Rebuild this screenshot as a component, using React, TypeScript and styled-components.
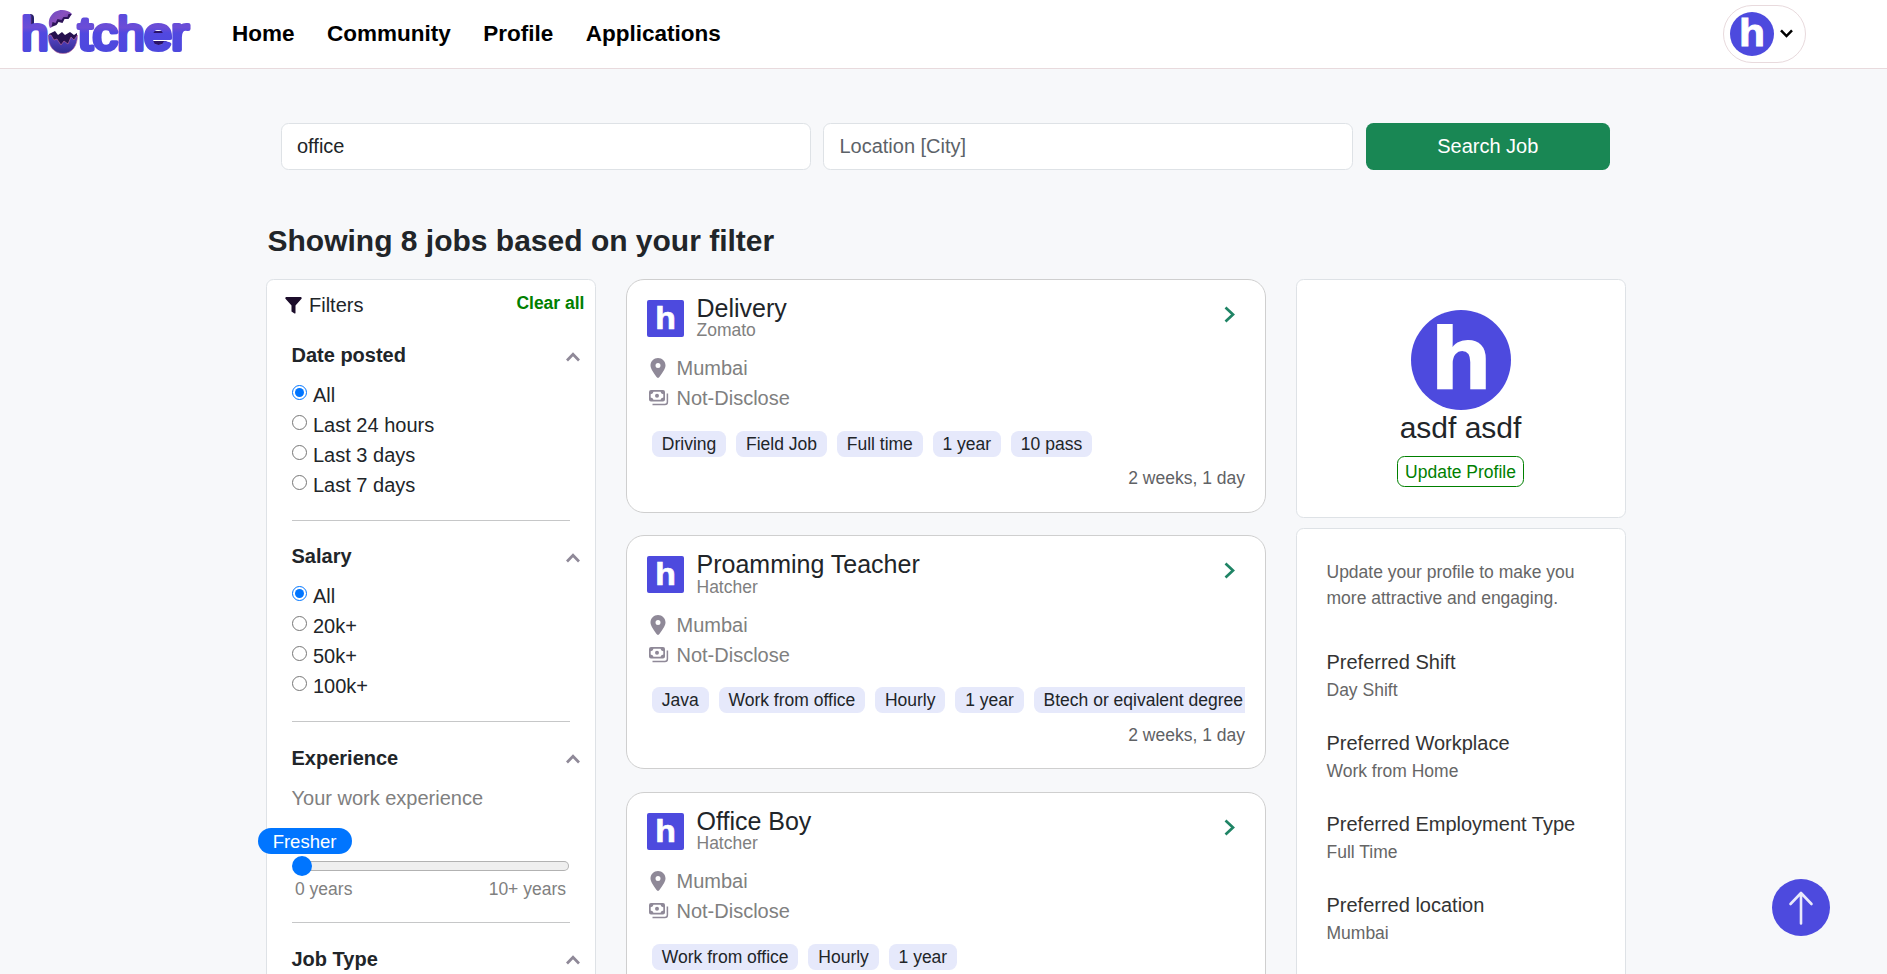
import React from "react";
import styled, { createGlobalStyle } from "styled-components";
import { FaLocationDot } from "react-icons/fa6";

const GlobalStyle = createGlobalStyle`
  *, *::before, *::after { box-sizing: border-box; }
  html, body { margin: 0; height: 100%; overflow: hidden; }
  body {
    background: #f7f8fa;
    color: #212529;
    font: 400 20px/30px "Liberation Sans", Arial, sans-serif;
  }
  p, h1, h2, h3 { margin: 0; font-weight: 400; }
`;

/* ---------- header ---------- */

const Header = styled.header`
  display: flex;
  align-items: center;
  height: 69px;
  padding: 0 81px 0 20px;
  background: #fff;
  border-bottom: 1px solid #e8dadd;
`;

const Nav = styled.nav`
  display: flex;
  gap: 32.5px;
  margin: -1px auto 0 38px;
`;

const NavLink = styled.a`
  color: #000;
  font-size: 22.5px;
  font-weight: 700;
  text-decoration: none;
`;

const AccountPill = styled.button`
  display: flex;
  align-items: center;
  gap: 6px;
  width: 83px;
  height: 58px;
  margin-top: -1px;
  padding: 0 6px;
  background: #fff;
  border: 1px solid #e8dadd;
  border-radius: 29px;
`;

/* ---------- search ---------- */

const Page = styled.main`
  width: 1360px;
  height: 905px;
  margin-left: 266px;
  overflow: clip;
  overflow-clip-margin: 20px;
`;

const SearchBar = styled.form`
  display: grid;
  grid-template-columns: 530px 530px 244px;
  column-gap: 12.4px;
  padding: 54px 15px 0;
`;

const SearchInput = styled.input`
  height: 47px;
  padding: 0 15px;
  color: #212529;
  background: #fff;
  border: 1px solid #dee2e6;
  border-radius: 7.5px;
  font: inherit;
  outline: none;
  &::placeholder { color: #5c6268; opacity: 1; }
`;

const SearchButton = styled.button`
  height: 47px;
  padding: 0 0 2px;
  color: #fff;
  background: #198754;
  border: 0;
  border-radius: 7.5px;
  font: inherit;
`;

const Heading = styled.h1`
  margin: 53px 0 20px 1.5px;
  font-size: 30px;
  font-weight: 700;
  line-height: 36px;
`;

const Columns = styled.div`
  display: grid;
  grid-template-columns: 330px 640px 330px;
  align-items: start;
  gap: 30px;
`;

/* ---------- filters ---------- */

const Panel = styled.section`
  background: #fff;
  border: 1px solid #dee2e6;
  border-radius: 7.5px;
`;

const FilterPanel = styled(Panel)`
  height: 900px;
`;

const FilterTop = styled.div`
  display: flex;
  align-items: flex-start;
  height: 60px;
  padding: 10px 10.5px 0 17.5px;
  svg { margin: 7px 7.5px 0 0; }
`;

const ClearAll = styled.a`
  margin: -2px 0 0 auto;
  color: green;
  font-size: 17.5px;
  font-weight: 700;
`;

const Group = styled.div`
  width: 278px;
  height: 201.25px;
  margin-left: 24.5px;
`;

const GroupHead = styled.div`
  display: flex;
  align-items: center;
  justify-content: space-between;
  height: 30px;
  margin: 0 -10px 10px 0;
  font-weight: 700;
  svg { margin-top: 3px; }
`;

const GroupBody = styled.div`
  height: 140.6px;
  border-bottom: 1px solid #c6c7c8;
`;

const Option = styled.label`
  display: flex;
  gap: 6.5px;
  height: 30px;
  input {
    width: 15px;
    height: 15px;
    margin: 5px 0 0;
  }
`;

const Hint = styled.p`
  color: #808080;
`;

const Bubble = styled.output`
  display: block;
  width: 94px;
  height: 26px;
  margin: 15.5px 0 2px -34px;
  color: #fff;
  background: #0075ff;
  border-radius: 13px;
  font-size: 18.5px;
  line-height: 27px;
  text-align: center;
`;

const Slider = styled.div`
  display: flex;
  align-items: center;
  width: 277px;
  height: 20px;
`;

const Thumb = styled.span`
  z-index: 1;
  width: 20px;
  height: 20px;
  background: #0075ff;
  border-radius: 50%;
`;

const Track = styled.span`
  flex: 1;
  height: 10px;
  margin-left: -5px;
  background: #efefef;
  border: 1px solid #b2b2b2;
  border-left: 0;
  border-radius: 0 5px 5px 0;
`;

const Scale = styled.div`
  display: flex;
  justify-content: space-between;
  padding: 0 3.5px 0 3.5px;
  color: #808080;
  font-size: 17.5px;
  line-height: 26px;
`;

/* ---------- jobs ---------- */

const JobList = styled.div`
  display: flex;
  flex-direction: column;
  gap: 22.4px;
`;

const JobCard = styled.article`
  height: 234px;
  padding: 20px;
  background: #fff;
  border: 1px solid #cfcfcf;
  border-radius: 18px;
`;

const JobHead = styled.div`
  display: flex;
  height: 53.2px;
`;

const CompanyBadge = styled.div`
  width: 37px;
  height: 37px;
  background: #4d4ade;
  border-radius: 2px;
`;

const JobNames = styled.div`
  margin: -5px auto 0 12.5px;
`;

const JobTitle = styled.h2`
  font-size: 25px;
  line-height: 26.2px;
`;

const Company = styled.p`
  color: #808080;
  font-size: 17.5px;
  line-height: 18px;
`;

const OpenIcon = styled.span`
  display: block;
  margin: 0 9px 0 0;
`;

const Detail = styled.div`
  display: grid;
  grid-template-columns: 29.5px auto;
  height: 30px;
  color: #808080;
  svg { color: #8f8998; }
`;

const Tags = styled.div`
  display: flex;
  gap: 10px;
  margin: 17.8px 0 8.2px 5px;
  overflow: hidden;
`;

const Tag = styled.span`
  flex: none;
  height: 26px;
  padding: 0 9.85px;
  background: #e6e9fb;
  border-radius: 7.5px;
  font-size: 17.5px;
  line-height: 26px;
  white-space: nowrap;
`;

const Age = styled.p`
  color: #5f6265;
  font-size: 17.5px;
  line-height: 26px;
  text-align: right;
`;

/* ---------- profile ---------- */

const ProfileCard = styled(Panel)`
  display: flex;
  flex-direction: column;
  align-items: center;
  height: 239px;
  margin-bottom: 10px;
  padding-top: 30px;
`;

const UserName = styled.h2`
  margin: 0 1px 10px 0;
  font-size: 30px;
  line-height: 36px;
`;

const UpdateButton = styled.button`
  width: 127px;
  height: 31px;
  margin-right: 1px;
  padding: 1px 0 0;
  color: green;
  background: #fff;
  border: 1px solid green;
  border-radius: 7.5px;
  font: 17.5px "Liberation Sans", Arial, sans-serif;
`;

const PreferenceCard = styled(Panel)`
  height: 500px;
  padding: 30px 29.5px;
`;

const Note = styled.p`
  margin-bottom: 35.5px;
  color: #666;
  font-size: 17.5px;
  line-height: 26.25px;
`;

const Preference = styled.div`
  height: 81px;
  color: #333;
  p {
    color: #666;
    font-size: 17.5px;
    line-height: 26px;
  }
`;

const ToTop = styled.button`
  position: fixed;
  right: 57px;
  bottom: 38px;
  width: 58px;
  height: 57px;
  padding: 0;
  background: #4d4ade;
  border: 0;
  border-radius: 50%;
`;

/* ---------- drawings ---------- */

const wordmarkLetters: [string, number, number][] = [
  ["h", 21.2, 1.07],
  ["t", 78, 1.15],
  ["c", 92.5, 1.1],
  ["h", 117.2, 1.07],
  ["e", 144, 1.1],
  ["r", 171, 1.18],
];

const Wordmark = () => (
  <svg width="174" height="56" viewBox="20 6 174 56" role="img" aria-label="hatcher">
    <defs>
      <linearGradient id="word" x1="0" y1="0" x2="0" y2="1">
        <stop offset="0.15" stopColor="#5c4bdc" />
        <stop offset="0.37" stopColor="#6c4dd6" />
        <stop offset="0.48" stopColor="#5148e0" />
        <stop offset="1" stopColor="#4b48dc" />
      </linearGradient>
      <linearGradient id="shell" x1="0" y1="0" x2="1" y2="1">
        <stop offset="0" stopColor="#6a4cc8" />
        <stop offset="0.45" stopColor="#8a50bd" />
        <stop offset="1" stopColor="#3b2a86" />
      </linearGradient>
      <linearGradient id="base" x1="0" y1="0" x2="0" y2="1">
        <stop offset="0" stopColor="#5a46c8" />
        <stop offset="1" stopColor="#302c92" />
      </linearGradient>
    </defs>
    <path d="M152 31h12v6h-12z M153 41h14q-5 6-14 3z" fill="#2a1368" />
    <path d="M30 14q4 0 4 4v8l-3 6v16q-1 3-5 3z" fill="#26206b" />
    <g
      fontFamily="Liberation Sans, Arial, sans-serif"
      fontSize="46"
      strokeWidth="4"
      strokeLinejoin="round"
      fill="url(#word)"
      stroke="url(#word)"
    >
      {wordmarkLetters.map(([letter, x, stretch]) => (
        <text key={x} transform={`translate(${x} 50) scale(${stretch} 1)`}>
          {letter}
        </text>
      ))}
    </g>
    <path d="M51 29 64 19l10 2 2 16-13 5-12-8z" fill="#fff" />
    <path d="m49 34 6-3 3 4 4-3 3 3 5-3 4 3 3-2v6l-5 8H54l-5-7z" fill="#26104f" />
    <path
      d="M48 35c0 11 6 18.500 15 18.500S77.500 46 77.500 35l-3.500 5-3-3-3 7-4-3-3 4-4-6-3 1-3-5z"
      fill="url(#base)"
      stroke="#c66a9c"
      strokeWidth=".6"
    />
    <path
      d="M50 28c-4-9 3-18 12-18 4 0 7 1 10 4l-3 4-4 0-2 3-4-1-2 4-4-1-1 4z"
      fill="url(#shell)"
    />
    <path d="m71.500 14-3 0-1 3-4 0-2 3-4-1-2 4-3-1-1 5 5-2 2-3 4 1 2-4 4 0z" fill="#2d1459" />
  </svg>
);

/* White brand letter centred in a 100x100 field. */
const BrandLetter = ({ size, x = 50, y = 78, scale = 1 }: { size: number; x?: number; y?: number; scale?: number }) => (
  <svg width={size} height={size} viewBox="0 0 100 100" style={{ display: "block" }}>
    <text
      transform={`translate(${x} ${y}) scale(${1.1 * scale} ${scale})`}
      textAnchor="middle"
      fontFamily="Liberation Sans, Arial, sans-serif"
      fontWeight="700"
      fontSize="88"
      fill="#fff"
      stroke="#fff"
      strokeWidth="2"
    >
      h
    </text>
  </svg>
);

const Avatar = styled.div<{ $size: number }>`
  flex: none;
  width: ${(p) => p.$size}px;
  height: ${(p) => p.$size}px;
  background: #4d4ade;
  border-radius: 50%;
`;

const ChevronUp = () => (
  <svg width="14" height="10" viewBox="0 0 14 10" fill="none" stroke="#8f8998" strokeWidth="2.700">
    <path d="M1 8.500 7 2.200l6 6.300" />
  </svg>
);

const Funnel = () => (
  <svg width="17" height="17" viewBox="0 0 17 17" fill="#1c0d2b">
    <path d="M1 0h15q1.200 1 .3 2L10.500 8.500V16q-.3.800-1 .5L6.500 14.500V8.500L.7 2Q-.2 1 1 0z" />
  </svg>
);

const Banknotes = () => (
  <svg width="20" height="16" viewBox="0 0 20 16" fill="none" stroke="currentColor" style={{ margin: "7px 0 0 2px" }}>
    <path
      fill="currentColor"
      stroke="none"
      fillRule="evenodd"
      d="M2 0h12q2 0 2 2v7.500q0 2-2 2H2q-2 0-2-2V2q0-2 2-2zM4.500 1.800Q4 4 1.700 4.200v3.200Q4 7.600 4.500 9.800h7Q12 7.600 14.300 7.400V4.200Q12 4 11.500 1.800z"
    />
    <circle cx="8" cy="5.800" r="2" fill="currentColor" stroke="none" />
    <path d="M18.400 3.500v8.500q0 2.500-2.500 2.500H3.500" strokeWidth="1.500" />
  </svg>
);

/* ---------- data ---------- */

const jobs = [
  { title: "Delivery", company: "Zomato", tags: ["Driving", "Field Job", "Full time", "1 year", "10 pass"] },
  {
    title: "Proamming Teacher",
    company: "Hatcher",
    tags: ["Java", "Work from office", "Hourly", "1 year", "Btech or eqivalent degree"],
  },
  { title: "Office Boy", company: "Hatcher", tags: ["Work from office", "Hourly", "1 year"] },
];

const radioGroups = [
  { title: "Date posted", options: ["All", "Last 24 hours", "Last 3 days", "Last 7 days"] },
  { title: "Salary", options: ["All", "20k+", "50k+", "100k+"] },
];

const preferences = [
  ["Preferred Shift", "Day Shift"],
  ["Preferred Workplace", "Work from Home"],
  ["Preferred Employment Type", "Full Time"],
  ["Preferred location", "Mumbai"],
];

export default function App() {
  return (
    <>
      <GlobalStyle />
      <Header>
        <Wordmark />
        <Nav>
          {["Home", "Community", "Profile", "Applications"].map((item) => (
            <NavLink key={item}>{item}</NavLink>
          ))}
        </Nav>
        <AccountPill>
          <Avatar $size={44}>
            <BrandLetter size={44} />
          </Avatar>
          <svg width="13" height="9" viewBox="0 0 13 9" fill="none" stroke="#000" strokeWidth="2.500">
            <path d="m1 1.300 5.500 5.700L12 1.300" />
          </svg>
        </AccountPill>
      </Header>

      <Page>
        <SearchBar>
          <SearchInput defaultValue="office" />
          <SearchInput placeholder="Location [City]" />
          <SearchButton type="button">Search Job</SearchButton>
        </SearchBar>
        <Heading>Showing 8 jobs based on your filter</Heading>

        <Columns>
          <FilterPanel>
            <FilterTop>
              <Funnel />
              Filters
              <ClearAll>Clear all</ClearAll>
            </FilterTop>
            {radioGroups.map((group) => (
              <Group key={group.title}>
                <GroupHead>
                  {group.title}
                  <ChevronUp />
                </GroupHead>
                <GroupBody>
                  {group.options.map((option, i) => (
                    <Option key={option}>
                      <input type="radio" name={group.title} defaultChecked={i === 0} />
                      {option}
                    </Option>
                  ))}
                </GroupBody>
              </Group>
            ))}
            <Group>
              <GroupHead>
                Experience
                <ChevronUp />
              </GroupHead>
              <GroupBody>
                <Hint>Your work experience</Hint>
                <Bubble>Fresher</Bubble>
                <Slider>
                  <Thumb />
                  <Track />
                </Slider>
                <Scale>
                  <span>0 years</span>
                  <span>10+ years</span>
                </Scale>
              </GroupBody>
            </Group>
            <Group>
              <GroupHead>
                Job Type
                <ChevronUp />
              </GroupHead>
            </Group>
          </FilterPanel>

          <JobList>
            {jobs.map((job) => (
              <JobCard key={job.title}>
                <JobHead>
                  <CompanyBadge>
                    <BrandLetter size={37} scale={0.94} y={79} />
                  </CompanyBadge>
                  <JobNames>
                    <JobTitle>{job.title}</JobTitle>
                    <Company>{job.company}</Company>
                  </JobNames>
                  <OpenIcon>
                    <svg width="12" height="17" viewBox="0 0 12 17" fill="none" stroke="#1f8465" strokeWidth="2.700" style={{ display: "block", marginTop: 6 }}>
                      <path d="m1.500 1.500 7.500 7-7.500 7" />
                    </svg>
                  </OpenIcon>
                </JobHead>
                <Detail>
                  <FaLocationDot size={20} style={{ margin: "5px 0 0 1px" }} />
                  Mumbai
                </Detail>
                <Detail>
                  <Banknotes />
                  Not-Disclose
                </Detail>
                <Tags>
                  {job.tags.map((tag) => (
                    <Tag key={tag}>{tag}</Tag>
                  ))}
                </Tags>
                <Age>2 weeks, 1 day</Age>
              </JobCard>
            ))}
          </JobList>

          <aside>
            <ProfileCard>
              <Avatar $size={100}>
                <BrandLetter size={100} />
              </Avatar>
              <UserName>asdf asdf</UserName>
              <UpdateButton>Update Profile</UpdateButton>
            </ProfileCard>
            <PreferenceCard>
              <Note>Update your profile to make you more attractive and engaging.</Note>
              {preferences.map(([label, value]) => (
                <Preference key={label}>
                  {label}
                  <p>{value}</p>
                </Preference>
              ))}
            </PreferenceCard>
          </aside>
        </Columns>
      </Page>

      <ToTop aria-label="Back to top">
        <svg width="58" height="57" viewBox="0 0 58 57" fill="none" stroke="#e9e9fb" strokeWidth="2.600" strokeLinecap="round" strokeLinejoin="round" style={{ display: "block" }}>
          <path d="M29 44.500V14M18.500 25 29 14l10.500 11" />
        </svg>
      </ToTop>
    </>
  );
}
